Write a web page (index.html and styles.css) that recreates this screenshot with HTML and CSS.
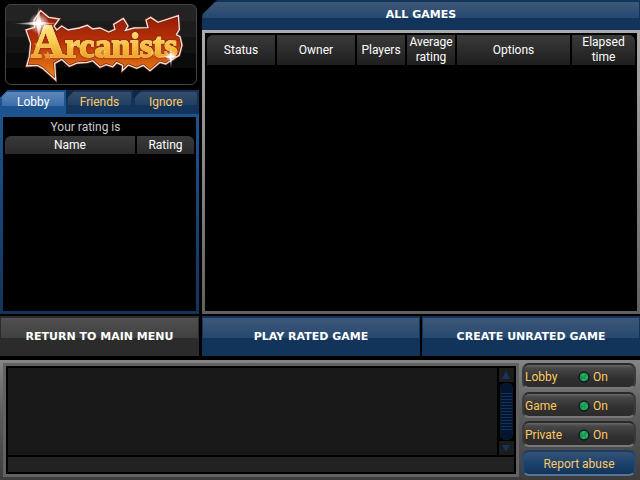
FILE: index.html
```
<!DOCTYPE html>
<html lang="en">
<head>
<meta charset="utf-8">
<title>Arcanists - Lobby</title>
<link rel="stylesheet" href="styles.css">
</head>
<body>
<div class="app">
  <div class="main">
    <aside class="side">
      <h1 class="logo">
        <svg viewBox="0 0 570 237" role="img" aria-label="Arcanists">
          <defs>
            <linearGradient id="lava" x1="0" y1="0" x2="0" y2="1">
              <stop offset="0" stop-color="#8e1607"/>
              <stop offset=".45" stop-color="#b93208"/>
              <stop offset="1" stop-color="#f08a14"/>
            </linearGradient>
            <linearGradient id="gold" x1="0" y1="0" x2="0" y2="1">
              <stop offset="0" stop-color="#fff6a8"/>
              <stop offset=".5" stop-color="#f8cc50"/>
              <stop offset="1" stop-color="#ee8c16"/>
            </linearGradient>
            <radialGradient id="glow">
              <stop offset="0" stop-color="#fff"/>
              <stop offset=".35" stop-color="#fff" stop-opacity=".7"/>
              <stop offset="1" stop-color="#fff" stop-opacity="0"/>
            </radialGradient>
          </defs>
          <g transform="translate(-18 -15)">
            <path d="M122 32L146 52L178 57L162 78L170 90L185 78L204 90L238 84L262 76L278 87L300 84L326 96L345 88L341 73L370 55L384 78L376 91L402 84L444 83L438 60L452 52L474 67L535 47L538 88L529 104L540 110L546 135L538 165L515 180L497 192L480 187L450 212L430 196L410 205L385 195L367 212L368 196L350 188L338 200L318 194L300 202L278 182L262 187L232 189L208 199L185 178L164 190L167 240L128 205L112 196L80 198L88 170L92 130L78 90L104 82L102 60Z" fill="url(#lava)" stroke="#6b2010" stroke-width="8"/>
            <path d="M122 32L146 52L178 57L162 78L170 90L185 78L204 90L238 84L262 76L278 87L300 84L326 96L345 88L341 73L370 55L384 78L376 91L402 84L444 83L438 60L452 52L474 67L535 47L538 88L529 104L540 110L546 135L538 165L515 180L497 192L480 187L450 212L430 196L410 205L385 195L367 212L368 196L350 188L338 200L318 194L300 202L278 182L262 187L232 189L208 199L185 178L164 190L167 240L128 205L112 196L80 198L88 170L92 130L78 90L104 82L102 60Z" fill="none" stroke="#f3e6dc" stroke-width="4"/>
            <text class="word" x="313" y="170" text-anchor="middle" fill="url(#gold)" stroke="url(#gold)" stroke-width="4"><tspan font-size="140">A</tspan><tspan font-size="102">rcanists</tspan></text>
            <path d="M143 154l4 8 9 1-7 6 2 9-8-5-8 5 2-9-7-6 9-1zM112 124l3 6 7 1-5 5 1 7-6-4-6 4 1-7-5-5 7-1zM217 126l3 6 7 1-5 5 1 7-6-4-6 4 1-7-5-5 7-1zM310 146l3 6 7 1-5 5 1 7-6-4-6 4 1-7-5-5 7-1zM458 149l3 6 7 1-5 5 1 7-6-4-6 4 1-7-5-5 7-1z" fill="#ffe07a" opacity=".5"/>
            <circle cx="117" cy="70" r="32" fill="url(#glow)"/>
            <path d="M38 71L109 65L116 16L123 65L180 71L123 75L117 126L110 75Z" fill="url(#glow)"/>
            <circle cx="513" cy="169" r="17" fill="url(#glow)"/>
            <path d="M475 170L509 167L513 138L516 167L548 170L516 173L513 208L509 173Z" fill="url(#glow)"/>
          </g>
        </svg>
      </h1>
      <div class="tabs" role="tablist">
        <button class="tab tab-active" role="tab" aria-selected="true">Lobby</button>
        <button class="tab" role="tab" aria-selected="false">Friends</button>
        <button class="tab" role="tab" aria-selected="false">Ignore</button>
      </div>
      <section class="players">
        <p class="rating">Your rating is</p>
        <table class="list">
          <colgroup><col><col class="w-rating"></colgroup>
          <thead><tr><th>Name</th><th>Rating</th></tr></thead>
        </table>
      </section>
    </aside>
    <section class="games">
      <h2 class="title">ALL GAMES</h2>
      <div class="games-body">
        <table class="list list-tall">
          <colgroup>
            <col class="w-status"><col class="w-owner"><col class="w-small"><col class="w-small"><col><col class="w-time">
          </colgroup>
          <thead><tr><th>Status</th><th>Owner</th><th>Players</th><th>Average rating</th><th>Options</th><th>Elapsed<br>time</th></tr></thead>
        </table>
      </div>
    </section>
  </div>
  <nav class="actions">
    <button class="action action-back">RETURN TO MAIN MENU</button>
    <div class="action-pair">
      <button class="action">PLAY RATED GAME</button>
      <button class="action">CREATE UNRATED GAME</button>
    </div>
  </nav>
  <footer class="chat">
    <div class="chat-box">
      <div class="chat-log">
        <div class="messages"></div>
        <div class="scroll">
          <button class="arrow" aria-label="Scroll up"><svg viewBox="0 0 14 14"><path d="M7 3L11 11H3Z"/></svg></button>
          <div class="thumb"></div>
          <button class="arrow" aria-label="Scroll down"><svg viewBox="0 0 14 14"><path d="M7 11L11 4H3Z"/></svg></button>
        </div>
      </div>
      <input class="entry" type="text" aria-label="Chat message">
    </div>
    <div class="filters">
      <button class="filter"><span class="name">Lobby</span><svg class="dot" viewBox="0 0 12 12"><circle cx="6" cy="6" r="5"/><path d="M3 4l3-2 1 2-2 2zM7 6l2-2 1 3-2 2zM4 8l2-1 1 2-2 1z"/></svg><span>On</span></button>
      <button class="filter"><span class="name">Game</span><svg class="dot" viewBox="0 0 12 12"><circle cx="6" cy="6" r="5"/><path d="M3 4l3-2 1 2-2 2zM7 6l2-2 1 3-2 2zM4 8l2-1 1 2-2 1z"/></svg><span>On</span></button>
      <button class="filter"><span class="name">Private</span><svg class="dot" viewBox="0 0 12 12"><circle cx="6" cy="6" r="5"/><path d="M3 4l3-2 1 2-2 2zM7 6l2-2 1 3-2 2zM4 8l2-1 1 2-2 1z"/></svg><span>On</span></button>
      <button class="filter report">Report abuse</button>
    </div>
  </footer>
</div>
</body>
</html>
```
FILE: styles.css
```
* {
  box-sizing: border-box;
}

body {
  margin: 0;
  background: #000;
  color: #fff;
  font: 12px/15px Roboto, "Liberation Sans", sans-serif;
}

h1, h2, p {
  margin: 0;
}

button, input {
  margin: 0;
  padding: 0;
  border: 0;
  font: inherit;
  color: inherit;
}

.app {
  display: flex;
  flex-direction: column;
  min-height: 100vh;
}

.main {
  flex: 1;
  display: flex;
  gap: 3px;
}

.side {
  flex: 0 0 199px;
  display: flex;
  flex-direction: column;
}

.logo {
  margin: 4px 2px 5px 5px;
  border: 1px solid #444;
  border-radius: 6px;
  background: linear-gradient(#232323 20%, #1c1c1c 20% 41%, #131313 41% 61%, #0b0b0b 61% 80%, #000 80%);
  line-height: 0;
}

.logo svg {
  display: block;
  width: 100%;
  height: 79px;
}

.word {
  font-family: "Liberation Serif", serif;
  font-weight: bold;
  filter: drop-shadow(0 0 2px #fff3d8) drop-shadow(0 0 3px #6b2010);
}

.tabs {
  display: flex;
  background: linear-gradient(90deg, #1d5490 33%, #12345a 33%);
  clip-path: polygon(8px 0, 100% 0, 100% 100%, 0 100%, 0 8px);
}

.tab {
  flex: 1;
  height: 24px;
  color: #ffc863;
  background:
    linear-gradient(135deg, #0d2746 6px, transparent 7px),
    linear-gradient(#354d69, #213f62) 2px 2px / calc(100% - 4px) 13px no-repeat,
    #12345a;
}

.tab-active {
  color: #fff;
  background:
    linear-gradient(135deg, #2a5c95 6px, transparent 7px),
    linear-gradient(#5c88ba, #3b6ea8) 2px 2px / calc(100% - 4px) 14px no-repeat,
    #1d5490;
}

.players {
  flex: 1;
  border: 3px solid;
  border-image: linear-gradient(#1d5490, #12345a) 3;
}

.rating {
  padding-top: 3px;
  color: #ccc;
  text-align: center;
  margin-right: 28px;
}

.players .list {
  margin-top: -1px;
}

.list {
  width: 100%;
  table-layout: fixed;
  border-collapse: separate;
  border-spacing: 2px;
}

.list th {
  height: 18px;
  padding: 0;
  font-weight: normal;
  background: linear-gradient(#3a3a3a, #2a2a2a);
}

.list th:first-child {
  border-top-left-radius: 6px;
}

.list th:last-child {
  border-top-right-radius: 6px;
}

.list-tall th {
  height: 30px;
  background: linear-gradient(#3a3a3a, #1e1e1e);
}

.w-rating { width: 57px; }
.w-status { width: 68px; }
.w-owner { width: 78px; }
.w-small { width: 48px; }
.w-time { width: 63px; }

.games {
  flex: 1;
  display: flex;
  flex-direction: column;
}

.title, .action {
  font: bold 11px/15px "DejaVu Sans", sans-serif;
  background:
    linear-gradient(#3d5878, #26486f) 1px 2px / calc(100% - 2px) 16px no-repeat,
    #12345a;
}

.title {
  height: 30px;
  line-height: 30px;
  text-align: center;
  clip-path: polygon(15px 0, 100% 0, 100% 100%, 0 100%, 0 15px);
}

.games-body {
  flex: 1;
  border: 3px solid;
  border-image: linear-gradient(#ababab, #606060) 3;
}

.actions {
  display: flex;
  gap: 3px;
  padding: 2px 0 4px;
}

.action-pair {
  flex: 1;
  display: flex;
  gap: 2px;
}

.action {
  flex: 1;
  height: 40px;
  background-size: calc(100% - 2px) 20px, auto;
}

.action-back {
  flex: 0 0 199px;
  background:
    linear-gradient(#505050, #404040) 1px 2px / calc(100% - 2px) 20px no-repeat,
    #2b2b2b;
}

.chat {
  display: flex;
  gap: 3px;
  height: 120px;
  padding: 3px 4px 3px 3px;
  background: linear-gradient(#858585, #5c5c5c 45%, #3d3c3d);
}

.chat-box {
  flex: 1;
  display: flex;
  flex-direction: column;
  gap: 2px;
  padding: 2px;
  border: 3px solid #626262;
  background: #000;
  background-clip: padding-box;
}

.chat-log {
  flex: 1;
  display: flex;
  gap: 2px;
}

.messages {
  flex: 1;
  background: #181818;
}

.scroll {
  width: 15px;
  display: flex;
  flex-direction: column;
  gap: 1px;
}

.arrow {
  height: 14px;
  background: #1c1c1c;
}

.arrow svg {
  display: block;
  width: 14px;
  height: 14px;
  fill: #14365c;
}

.thumb {
  flex: 1;
  margin: 0 1px;
  border: 1px solid #081a30;
  border-radius: 5px;
  background:
    linear-gradient(#06152e, #06152e) 0 0 / 100% 8px no-repeat,
    linear-gradient(#06152e, #06152e) 0 100% / 100% 8px no-repeat,
    repeating-linear-gradient(#12345e 0 1px, #06152e 1px 3px);
}

.entry {
  width: 100%;
  height: 15px;
  background: #222;
}

.filters {
  flex: 0 0 114px;
  display: flex;
  flex-direction: column;
  gap: 3px;
}

.filter {
  display: flex;
  align-items: center;
  height: 26px;
  padding: 2px 1px 0;
  color: #ffc863;
  text-align: left;
  border: 2px solid;
  border-color: #292929 #3b3b3b #777 #3b3b3b;
  border-radius: 7px;
  background: linear-gradient(#686868, #484848 3px, #303030 60%, #2b2b2b);
}

.name {
  width: 53px;
}

.dot {
  width: 12px;
  height: 12px;
  margin-right: 3px;
}

.dot circle {
  fill: #1a8c6c;
  stroke: #000;
}

.dot path {
  fill: #24b83f;
}

.report {
  justify-content: center;
  border-color: #1c3c63 #2c4768 #597494 #2c4768;
  background: linear-gradient(#365375, #1c436f 50%, #12345a);
}
```
